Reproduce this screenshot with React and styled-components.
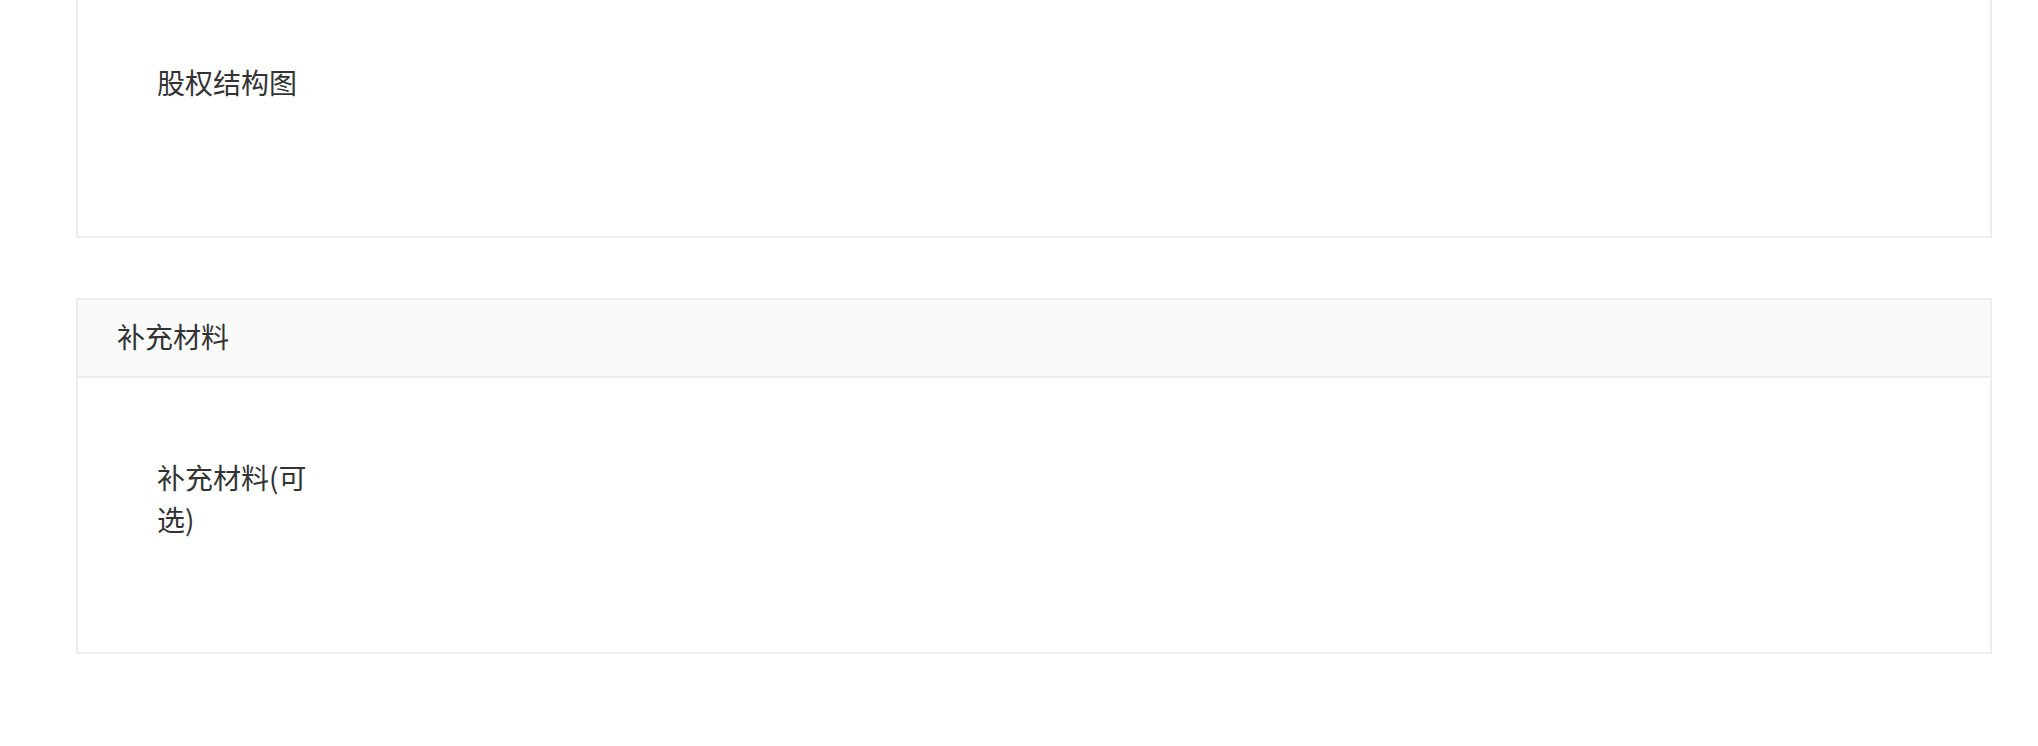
import React from 'react';
import styled, { createGlobalStyle } from 'styled-components';

const GlobalStyle = createGlobalStyle`
	html, body {
		margin: 0;
		padding: 0;
		background: #ffffff;
	}
	body {
		font-family: 'Noto Sans CJK SC', 'Noto Sans', sans-serif;
		color: #333333;
	}
`;

const Page = styled.div`
	display: flex;
	flex-direction: column;
	gap: 60px;
	padding: 0 46px 0 76px;
`;

const Card = styled.section`
	border: 2px solid #eeeeee;
	border-top: ${(props) => (props.$cut ? 'none' : '2px solid #eeeeee')};
	background: #ffffff;
`;

const Header = styled.div`
	background: #fafafa;
	border-bottom: 2px solid #eeeeee;
	padding: 15px 39px 19px;
	font-size: 28px;
	line-height: 42px;
`;

const Body = styled.div`
	padding: ${(props) => (props.$cut ? '0' : '38px')} 40px 40px;
`;

const Row = styled.div`
	display: flex;
	align-items: center;
	min-height: 164px;
	margin-bottom: 32px;
`;

const Label = styled.div`
	width: 160px;
	padding-left: 39px;
	font-size: 28px;
	line-height: 42px;
	word-break: break-all;
`;

const Field = styled.div`
	flex: 1;
`;

export default function App() {
	return (
		<>
			<GlobalStyle />
			<Page>
				<Card $cut>
					<Body $cut>
						<Row>
							<Label>股权结构图</Label>
							<Field />
						</Row>
					</Body>
				</Card>
				<Card>
					<Header>补充材料</Header>
					<Body>
						<Row>
							<Label>补充材料(可选)</Label>
							<Field />
						</Row>
					</Body>
				</Card>
			</Page>
		</>
	);
}
